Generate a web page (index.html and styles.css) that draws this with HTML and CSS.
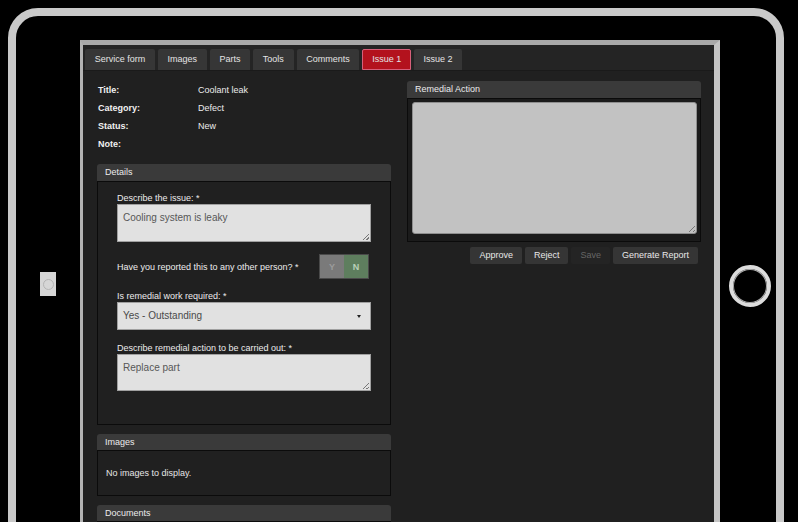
FILE: index.html
```html
<!DOCTYPE html>
<html>
<head>
<meta charset="utf-8">
<link rel="stylesheet" href="styles.css">
</head>
<body>
<div class="device">
  <div class="side side-left"><div class="camera"><span class="lens"></span></div></div>
  <div class="screen">
    <div class="tabbar">
      <div class="tab">Service form</div>
      <div class="tab">Images</div>
      <div class="tab">Parts</div>
      <div class="tab">Tools</div>
      <div class="tab">Comments</div>
      <div class="tab tab-active">Issue 1</div>
      <div class="tab">Issue 2</div>
    </div>
    <div class="content">
      <div class="col">
        <div class="info">
          <div class="info-label">Title:</div><div class="info-value">Coolant leak</div>
          <div class="info-label">Category:</div><div class="info-value">Defect</div>
          <div class="info-label">Status:</div><div class="info-value">New</div>
          <div class="info-label">Note:</div><div class="info-value"></div>
        </div>
        <div class="panel">
          <div class="panel-head">Details</div>
          <div class="panel-body details">
            <label class="field-label">Describe the issue: *</label>
            <div class="textarea">Cooling system is leaky<span class="grip"></span></div>
            <div class="yn-row">
              <span class="field-label">Have you reported this to any other person? *</span>
              <div class="toggle"><span class="yn yn-y">Y</span><span class="yn yn-n">N</span></div>
            </div>
            <label class="field-label">Is remedial work required: *</label>
            <div class="select">Yes - Outstanding<span class="caret"></span></div>
            <label class="field-label">Describe remedial action to be carried out: *</label>
            <div class="textarea textarea-short">Replace part<span class="grip"></span></div>
          </div>
        </div>
        <div class="panel">
          <div class="panel-head panel-head-sm">Images</div>
          <div class="panel-body images">No images to display.</div>
        </div>
        <div class="panel">
          <div class="panel-head panel-head-sm">Documents</div>
          <div class="panel-body docs"></div>
        </div>
      </div>
      <div class="col">
        <div class="panel panel-flush">
          <div class="panel-head">Remedial Action</div>
          <div class="panel-body remedial">
            <div class="big-textarea"><span class="grip"></span></div>
          </div>
        </div>
        <div class="buttons">
          <div class="btn">Approve</div>
          <div class="btn">Reject</div>
          <div class="btn btn-disabled">Save</div>
          <div class="btn">Generate Report</div>
        </div>
      </div>
    </div>
  </div>
  <div class="side side-right"><div class="home"></div></div>
</div>
</body>
</html>
```
FILE: styles.css
```css
html, body {
  margin: 0;
  padding: 0;
  background: #000;
  width: 798px;
  height: 522px;
  overflow: hidden;
  font-family: "Liberation Sans", Arial, sans-serif;
}

.device {
  margin: 8px 0 0 8px;
  width: 776px;
  height: 600px;
  box-sizing: border-box;
  border: 8px solid #c9c9c9;
  border-radius: 30px;
  display: flex;
}

.side { flex: none; }
.side-left { width: 64px; padding: 256px 0 0 24px; box-sizing: border-box; }
.side-right { flex: 1; padding: 249px 0 0 9px; box-sizing: border-box; }

.camera {
  width: 16px;
  height: 24px;
  background: #d6d6d6;
  display: flex;
  align-items: center;
  justify-content: center;
}
.lens {
  width: 9px;
  height: 9px;
  border-radius: 50%;
  border: 1px solid #b4b4b4;
}

.home {
  width: 42px;
  height: 42px;
  box-sizing: border-box;
  border-radius: 50%;
  border: 4px solid #dcdcdc;
  box-shadow: inset 0 0 0 1px #a8a8a8;
}

.screen {
  flex: none;
  width: 640px;
  height: 560px;
  margin-top: 24px;
  box-sizing: border-box;
  border-top: 5px solid #a9a9a9;
  border-left: 3px solid #b3b3b3;
  border-right: 6px solid #c4c4c4;
  background: #202020;
  color: #e6e6e6;
  font-size: 9px;
}

.tabbar {
  height: 26px;
  box-sizing: border-box;
  background: #242424;
  border-bottom: 1px solid #1a1a1a;
  padding: 5px 0 0 2px;
  display: flex;
  gap: 3px;
  align-items: flex-end;
}
.tab {
  height: 21px;
  line-height: 20px;
  padding: 0 9.7px;
  background: #363636;
  color: #e4e4e4;
  border-radius: 2px 2px 0 0;
  box-sizing: border-box;
}
.tab-active {
  background: #b3121d;
  border: 1px solid #d6607a;
  padding: 0 8.7px;
  line-height: 19px;
}

.content {
  display: flex;
  gap: 16px;
  padding: 10px 13px 0 14px;
}
.col { width: 294px; flex: none; }

.info {
  display: grid;
  grid-template-columns: 100px 1fr;
  grid-auto-rows: 18px;
  line-height: 18px;
  padding-left: 1px;
  margin-bottom: 11px;
}
.info-label { font-weight: bold; color: #f0f0f0; }
.info-value { color: #ececec; }

.panel { margin-bottom: 9px; }
.panel-flush { margin-bottom: 0; }
.panel-head {
  height: 17px;
  line-height: 17px;
  background: #3a3a3a;
  border-radius: 3px 3px 0 0;
  padding-left: 8px;
  color: #ececec;
}
.panel-head-sm { height: 16px; line-height: 16px; }
.panel-body {
  border: 1px solid #0b0b0b;
  background: #202020;
  box-sizing: border-box;
}

.details {
  height: 244px;
  padding: 10px 19px 0 19px;
  display: flex;
  flex-direction: column;
}
.field-label {
  display: block;
  line-height: 12px;
  height: 12px;
  color: #ececec;
}
.textarea {
  position: relative;
  height: 38px;
  box-sizing: border-box;
  margin-bottom: 12px;
  background: #e1e1e1;
  border: 1px solid #a0a0a0;
  color: #575757;
  font-size: 10px;
  padding: 7px 5px;
}
.textarea-short { height: 37px; }
.grip {
  position: absolute;
  right: 1px;
  bottom: 1px;
  width: 6px;
  height: 6px;
  background: linear-gradient(135deg, transparent 45%, #777 45%, #777 55%, transparent 55%, transparent 75%, #777 75%, #777 85%, transparent 85%);
}

.yn-row {
  display: flex;
  align-items: center;
  justify-content: space-between;
  height: 25px;
  margin-bottom: 11px;
}
.toggle {
  display: flex;
  height: 25px;
  box-sizing: border-box;
  border: 1px solid #4a4a4a;
  margin-right: 2px;
}
.yn {
  width: 24px;
  display: flex;
  align-items: center;
  justify-content: center;
  font-weight: bold;
}
.yn-y { background: #7a7a7a; color: #9c9c9c; }
.yn-n { background: #5e7e5e; color: #b9cfb9; }

.select {
  position: relative;
  height: 28px;
  line-height: 26px;
  box-sizing: border-box;
  margin-bottom: 12px;
  background: #e1e1e1;
  border: 1px solid #a0a0a0;
  color: #4a4a4a;
  font-size: 10px;
  padding-left: 5px;
}
.caret {
  position: absolute;
  right: 9px;
  top: 12px;
  width: 0;
  height: 0;
  border-left: 2.5px solid transparent;
  border-right: 2.5px solid transparent;
  border-top: 3px solid #222;
}

.images {
  height: 46px;
  line-height: 44px;
  padding-left: 8px;
}
.docs { height: 40px; }

.remedial {
  height: 144px;
  background: #1b1b1b;
  padding: 3px 3px 0 4px;
}
.big-textarea {
  position: relative;
  height: 132px;
  box-sizing: border-box;
  background: #c2c2c2;
  border: 1px solid #8e8e8e;
  border-radius: 3px;
}

.buttons {
  display: flex;
  justify-content: flex-end;
  gap: 3px;
  margin-top: 5px;
  padding-right: 3px;
}
.btn {
  height: 17px;
  line-height: 17px;
  padding: 0 9px;
  background: #353535;
  color: #e8e8e8;
  border-radius: 2px;
}
.btn-disabled { background: #242424; color: #666; }
```
